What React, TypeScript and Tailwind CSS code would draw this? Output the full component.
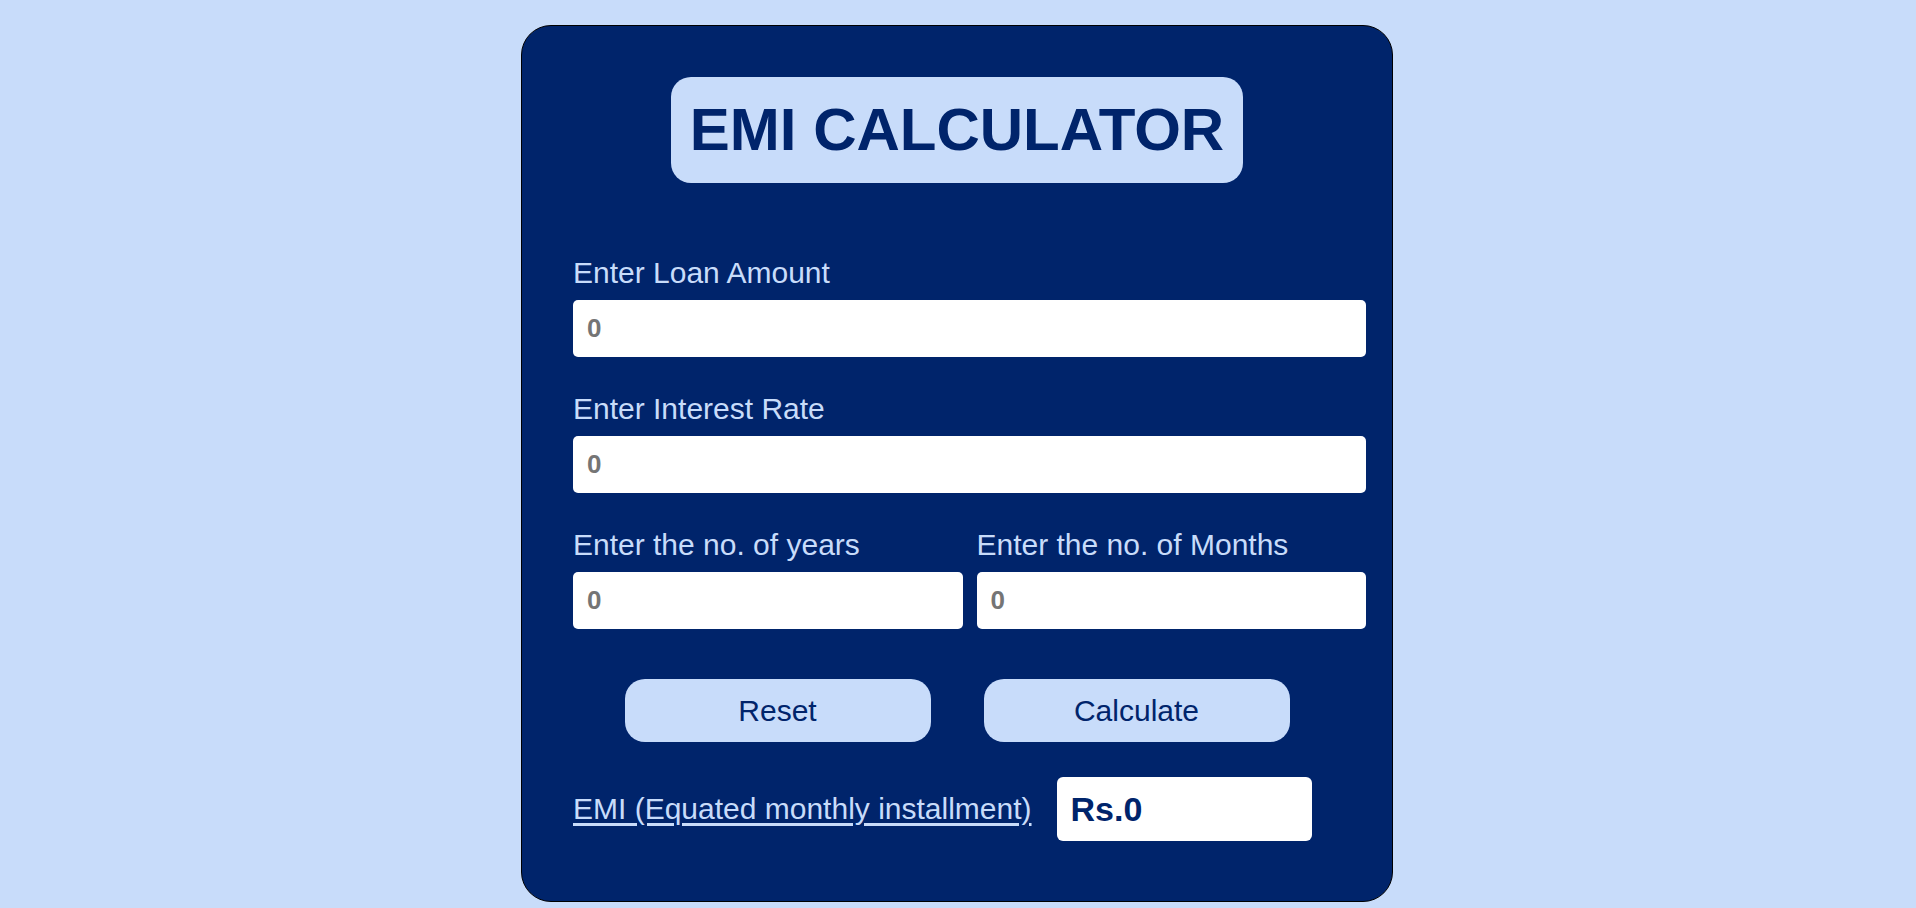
const fields = [
  { label: "Enter Loan Amount", name: "amount" },
  { label: "Enter Interest Rate", name: "rate" },
];

const split = [
  { label: "Enter the no. of years", name: "years" },
  { label: "Enter the no. of Months", name: "months" },
];

function Field({ label, name }: { label: string; name: string }) {
  return (
    <div className="flex flex-col">
      <label htmlFor={name} className="text-[30px] leading-[34px] text-[#c8dcfa]">
        {label}
      </label>
      <input
        id={name}
        type="text"
        placeholder="0"
        className="mt-[10px] h-[57px] w-full rounded-[5px] bg-white px-[14px] text-[26px] font-bold text-[#00246b] outline-none placeholder:text-[#757575]"
      />
    </div>
  );
}

export default function App() {
  return (
    <div className="flex min-h-screen justify-center bg-[#c8dcfa] pr-[2px] pt-[25px] font-['Liberation_Sans',Arial,sans-serif]">
      <div className="h-[877px] w-[872px] rounded-[30px] border border-black bg-[#00246b]">
        <div className="mt-[51px] flex justify-center">
          <h1 className="flex h-[106px] w-[572px] items-center justify-center rounded-[20px] bg-[#c8dcfa] text-[60px] font-bold text-[#00246b]">
            EMI CALCULATOR
          </h1>
        </div>

        <div className="mt-[73px] flex flex-col gap-[35px] pl-[51px] pr-[26px]">
          {fields.map((f) => (
            <Field key={f.name} label={f.label} name={f.name} />
          ))}
          <div className="grid grid-cols-2 gap-[14px]">
            {split.map((f) => (
              <Field key={f.name} label={f.label} name={f.name} />
            ))}
          </div>
        </div>

        <div className="mt-[50px] flex justify-center gap-[53px]">
          <button className="h-[63px] w-[306px] rounded-[20px] bg-[#c8dcfa] text-[30px] text-[#00246b]">
            Reset
          </button>
          <button className="h-[63px] w-[306px] rounded-[20px] bg-[#c8dcfa] text-[30px] text-[#00246b]">
            Calculate
          </button>
        </div>

        <div className="mt-[35px] flex items-center gap-[25px] pl-[51px]">
          <span className="text-[30px] leading-[34px] text-[#c8dcfa] underline underline-offset-[4px]">
            EMI (Equated monthly installment)
          </span>
          <div className="flex h-[64px] w-[255px] items-center rounded-[6px] bg-white pl-[14px] text-[34px] font-bold text-[#00246b]">
            Rs.0
          </div>
        </div>
      </div>
    </div>
  );
}
